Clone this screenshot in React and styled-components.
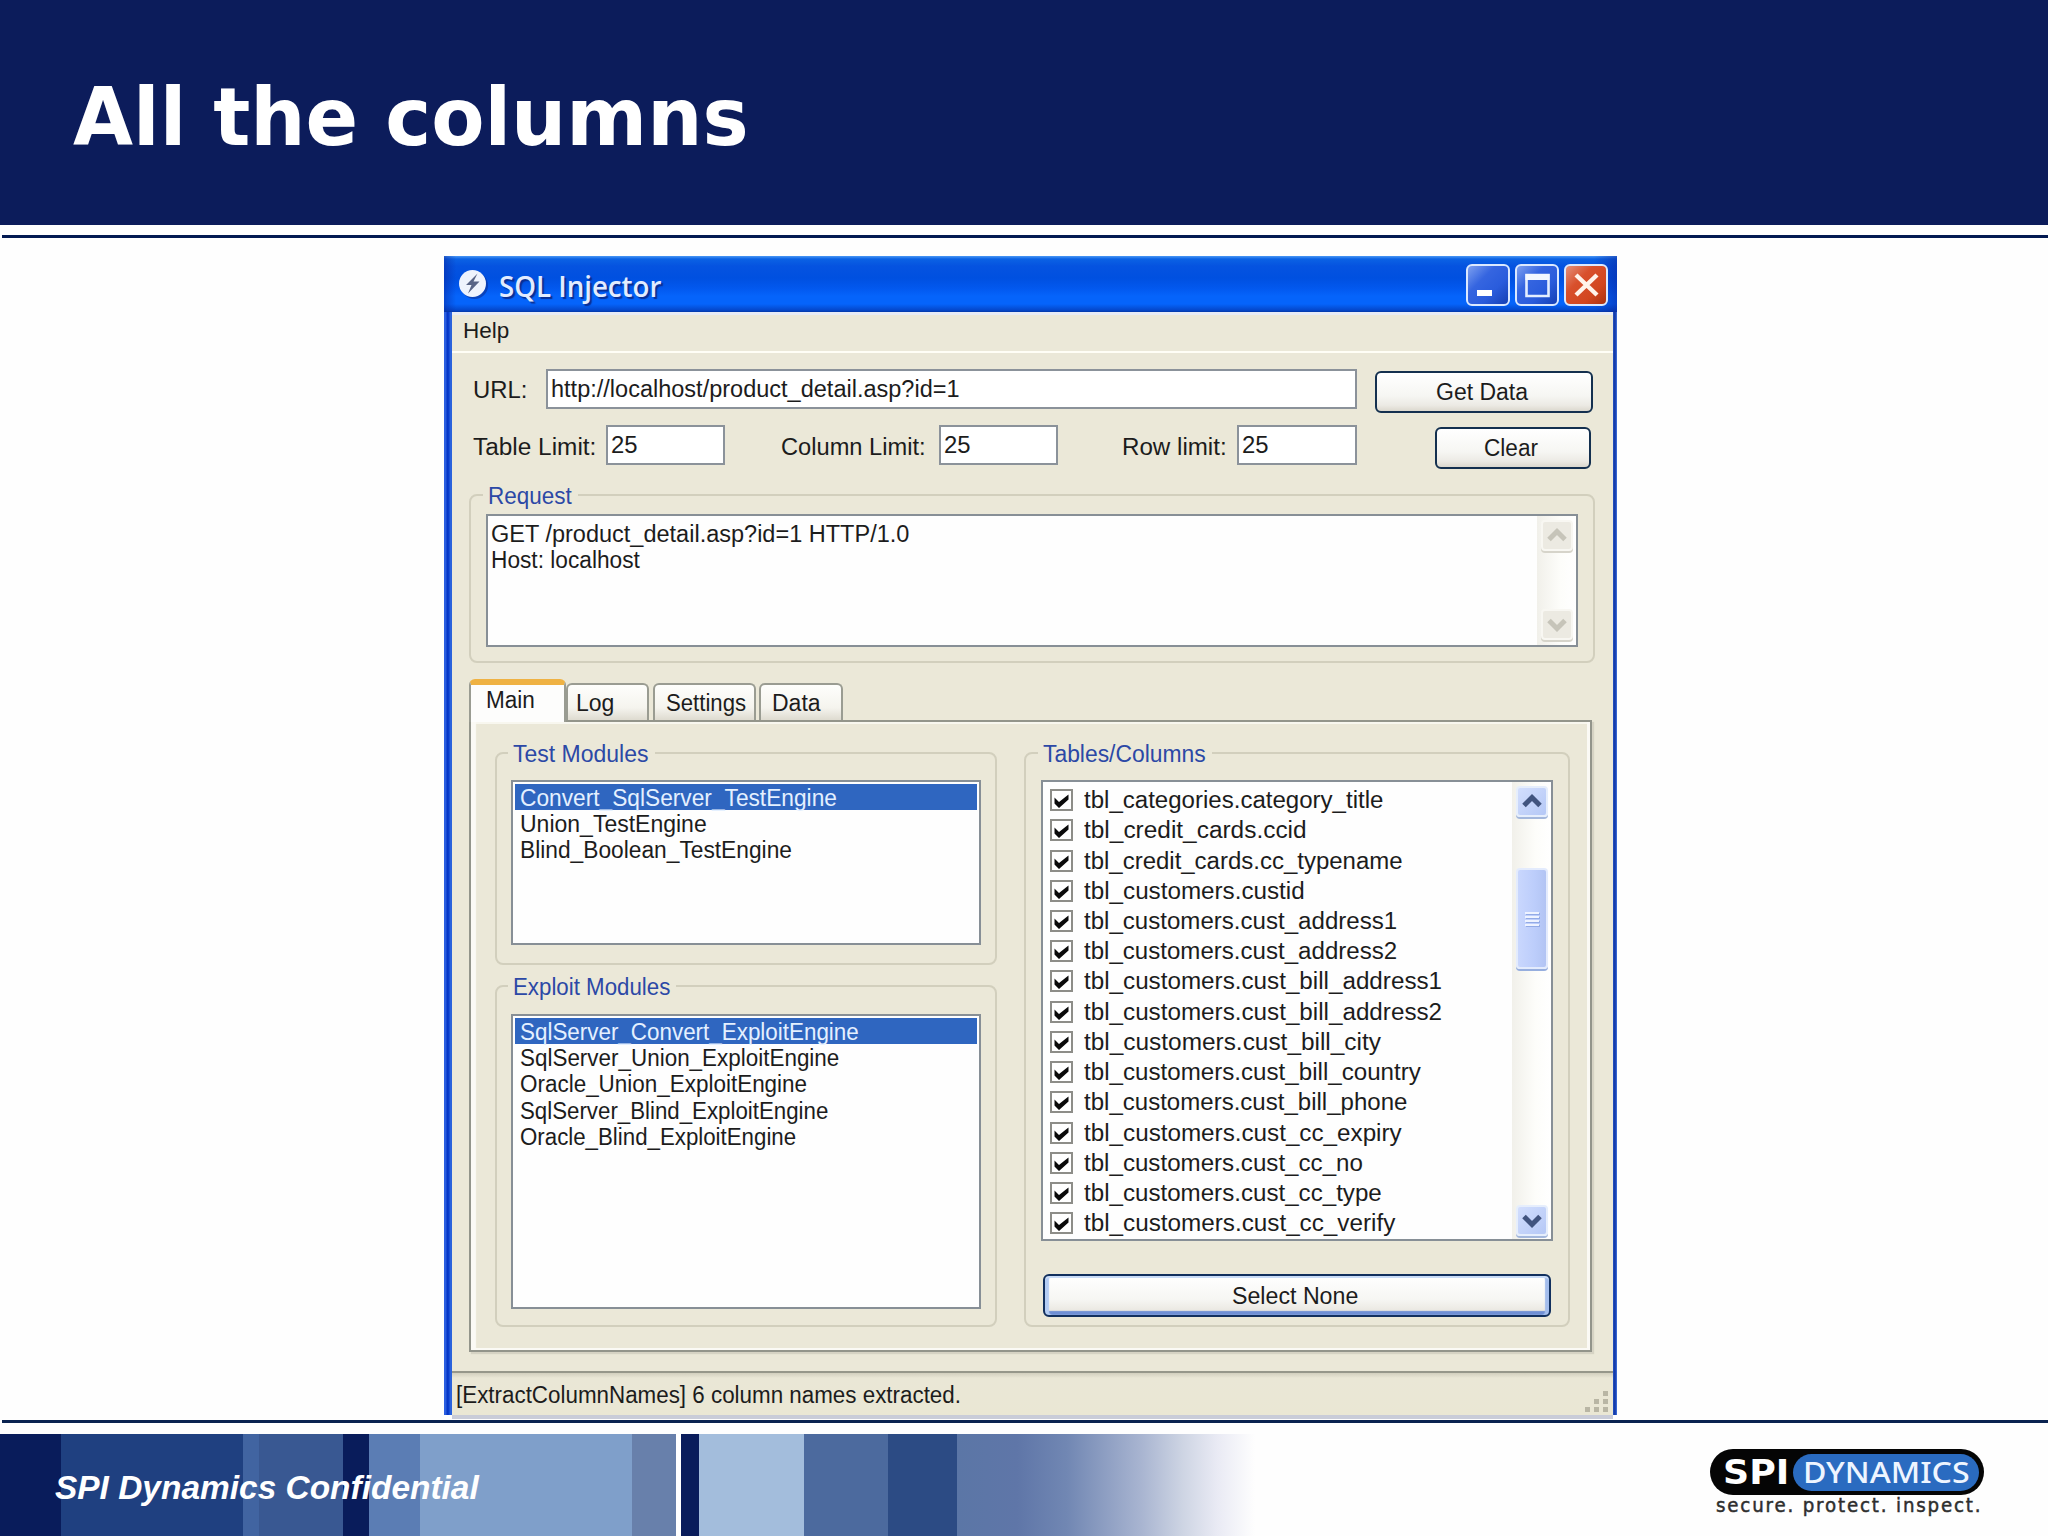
import React, { useLayoutEffect, useRef, useState } from "react";
import styled, { createGlobalStyle, css } from "styled-components";

const GlobalStyle = createGlobalStyle`
  *, *::before, *::after { box-sizing: border-box; }
  body { margin: 0; background: #fff; }
`;

const SANS = `"Liberation Sans", Arial, sans-serif`;

const FitBox = styled.span`
  display: inline-block;
  flex: none;
  width: ${(p) => p.$w}px;
  white-space: nowrap;
  text-align: left;
`;

const FitInner = styled.span`
  display: inline-block;
  transform-origin: 0 50%;
`;

/* A run of text condensed or widened to a given width. */
function Fit({ w, children }) {
  const ref = useRef(null);
  const [scale, setScale] = useState(1);
  useLayoutEffect(() => {
    setScale(w / ref.current.offsetWidth);
  }, [w, children]);
  return (
    <FitBox $w={w}>
      <FitInner ref={ref} style={{ transform: `scaleX(${scale})` }}>
        {children}
      </FitInner>
    </FitBox>
  );
}

/* ---------- slide ---------- */

const Slide = styled.div`
  width: 2048px;
  height: 1536px;
  display: flex;
  flex-direction: column;
  overflow: hidden;
  background: #fefefe;
  font-family: ${SANS};
`;

const SlideHeader = styled.header`
  height: 225px;
  flex: none;
  background: #0c1c5b;
  padding: 58px 0 0 73px;
`;

const SlideTitle = styled.h1`
  margin: 0;
  font: bold 80px/120px "DejaVu Sans", Verdana, sans-serif;
  color: #fff;
`;

const Rule = styled.div`
  height: 3px;
  flex: none;
  margin: ${(p) => p.$top}px 0 0 2px;
  background: ${(p) => p.$color};
`;

const SlideFooter = styled.footer`
  height: 102px;
  flex: none;
  margin-top: 11px;
  display: grid;
  grid-template: 102px / 2048px;
  > * { grid-area: 1 / 1; }
`;

const Bands = styled.div`
  display: flex;
`;

const Band = styled.div`
  width: ${(p) => p.$w}px;
  background: ${(p) => p.$bg};
`;

const FooterContent = styled.div`
  display: flex;
  justify-content: space-between;
  padding: 0 64px 0 55px;
`;

const FooterText = styled.div`
  font: italic bold 34px/40px ${SANS};
  padding-top: 33px;
  color: #fff;
`;

const Logo = styled.div`
  width: 274px;
  padding-top: 15px;
`;

const LogoPill = styled.div`
  height: 46px;
  display: flex;
  align-items: center;
  border-radius: 23px;
  background: #050505;
  padding: 0 5px 0 13px;
`;

const LogoSpi = styled.div`
  width: 70px;
  padding-top: 2px;
  font: bold 33px/40px "DejaVu Sans", sans-serif;
  color: #fff;
`;

const LogoDynamics = styled.div`
  flex: 1;
  height: 37px;
  border-radius: 19px;
  background: #2a6bc0;
  padding-left: 10px;
  font: 500 29px/36px "Noto Sans", sans-serif;
  color: #eef5ff;
`;

const LogoTag = styled.div`
  font: 20px/24px "DejaVu Sans", sans-serif;
  letter-spacing: 2px;
  padding: 0 0 0 6px;
  margin-top: -2px;
  color: #2e2e2e;
  -webkit-text-stroke: 0.5px #2e2e2e;
`;

/* ---------- window ---------- */

const Window = styled.section`
  width: 1173px;
  height: 1159px;
  flex: none;
  margin: 18px 0 0 444px;
  display: flex;
  flex-direction: column;
  background: linear-gradient(90deg, #2b5fe0 0, #2b5fe0 2px, #0434c4 3px, #0a3fd0 5px, #2a62dc 6px, #2a62dc 8px, transparent 8px, transparent 1168px, #2f62cf 1169px, #1237a6 1170px, #1d48b8 1172px, #4f82e8 1173px);
`;

const TitleBar = styled.div`
  height: 56px;
  flex: none;
  display: flex;
  align-items: flex-start;
  padding: 8px 9px 0 14px;
  background:
    linear-gradient(90deg, rgba(10, 40, 160, 0.5) 0, rgba(10, 40, 160, 0) 12px, rgba(10, 40, 160, 0) 1150px, rgba(10, 40, 160, 0.55) 1173px),
    linear-gradient(180deg, #4a97f5 0, #0b62e4 3px, #0553e0 10px, #0050e0 22px, #0258ee 32px, #0564fb 40px, #0564fb 48px, #0448cc 54px, #0338a8 56px);
`;

const AppIcon = styled.svg`
  width: 30px;
  height: 32px;
  margin-top: 4px;
`;

const Caption = styled.div`
  flex: 1;
  padding: 2px 0 0 11px;
  font: 600 28px/40px "Open Sans", "Noto Sans", sans-serif;
  color: #e2ecff;
  text-shadow: 2px 2px 1px #0a2f94;
`;

const CaptionButtons = styled.div`
  display: flex;
  gap: 5px;
`;

const CaptionButton = styled.div`
  width: 44px;
  height: 42px;
  border: 2px solid #dbe9ff;
  border-radius: 6px;
  background: ${(p) =>
    p.$close
      ? "linear-gradient(135deg, #e4907a 0, #d8502c 35%, #d2461f 70%, #a93212 100%)"
      : "linear-gradient(135deg, #7da0f0 0, #3565e0 35%, #2a5cdc 65%, #1540b4 100%)"};
  svg { display: block; width: 40px; height: 38px; }
`;

const Client = styled.div`
  flex: 1;
  min-height: 0;
  margin: 0 4px 0 8px;
  display: flex;
  flex-direction: column;
  background: #ebe8d8;
  font-size: 23px;
  line-height: 26px;
  color: #1c1c1c;
`;

const MenuBar = styled.div`
  height: 41px;
  flex: none;
  border-top: 3px solid #e7ebf5;
  border-bottom: 2px solid #fffef6;
  padding: 3px 0 0 11px;
  font-size: 22px;
`;

const FormRow = styled.div`
  display: flex;
  flex: none;
  height: ${(p) => p.$h}px;
  margin-top: ${(p) => p.$top || 0}px;
  padding-left: 21px;
`;

const Label = styled.label`
  width: ${(p) => p.$w}px;
  padding-top: ${(p) => p.$top}px;
  margin-left: ${(p) => p.$left || 0}px;
`;

const Field = styled.div`
  width: ${(p) => p.$w}px;
  height: 40px;
  border: 2px solid #8b929a;
  background: #fff;
  padding: 5px 0 0 3px;
`;

const Button = styled.button`
  display: block;
  width: ${(p) => p.$w}px;
  height: ${(p) => p.$h || 42}px;
  margin: ${(p) => p.$margin};
  padding: 0 4px 0 0;
  border: 2px solid #14304f;
  border-radius: 6px;
  background: linear-gradient(180deg, #fff 0, #f6f6f3 60%, #eceae4 85%, #dcd8ce 100%);
  font: 23px/26px ${SANS};
  color: #1c1c1c;
  ${(p) =>
    p.$focused &&
    css`
      border-color: #12305e;
      box-shadow: inset 0 2px 0 #c9dcf8, inset 4px 0 1px #b4cdf4, inset -4px 0 1px #a3bdec, inset 0 -4px 1px #6f8fd4;
    `}
`;

const Group = styled.fieldset`
  margin: ${(p) => p.$margin || 0};
  width: ${(p) => p.$w}px;
  height: ${(p) => p.$h}px;
  min-width: 0;
  flex: none;
  padding: ${(p) => p.$pad};
  border: 2px solid #d2cfbd;
  border-radius: 8px;
`;

const Legend = styled.legend`
  margin-left: -3px;
  padding: 1px 6px 0 5px;
  height: 26px;
  line-height: 26px;
  color: #2c48a6;
`;

const Sunken = styled.div`
  width: ${(p) => p.$w}px;
  height: ${(p) => p.$h}px;
  border: 2px solid #878f96;
  background: #fefefe;
  display: flex;
  justify-content: space-between;
`;

const RequestText = styled.div`
  padding: 5px 0 0 3px;
  > * { display: block; }
`;

const ScrollTrack = styled.div`
  width: 39px;
  padding: ${(p) => p.$pad};
  display: flex;
  flex-direction: column;
  align-items: center;
  background: linear-gradient(90deg, #f1f0ea, #fdfdfa 60%, #fff);
`;

const ScrollButton = styled.div`
  width: 32px;
  height: 31px;
  flex: none;
  border-radius: 4px;
  border: 2px solid ${(p) => (p.$off ? "#f8f7f2" : "#e6eefc")};
  background: ${(p) => (p.$off ? "#eceae2" : "linear-gradient(135deg, #d2defd, #b5c8f6)")};
  box-shadow: 0 2px 0 ${(p) => (p.$off ? "#d6d4ca" : "#a3b7dc")};
  svg { display: block; width: 28px; height: 27px; }
`;

const ScrollSpace = styled.div`
  flex: ${(p) => (p.$h ? `0 0 ${p.$h}px` : "1")};
`;

const Thumb = styled.div`
  width: 32px;
  height: 101px;
  flex: none;
  display: flex;
  flex-direction: column;
  align-items: center;
  justify-content: center;
  gap: 2px;
  border-radius: 4px;
  border: 2px solid #e3ebfd;
  background: linear-gradient(90deg, #c9d7fd, #bccdfb 60%, #b2c4f3);
  box-shadow: 0 2px 0 #96aede;
`;

const Grip = styled.div`
  width: 14px;
  height: 2px;
  background: #eef3ff;
  box-shadow: 1px 1px 0 #93abe6;
`;

const TabRow = styled.div`
  display: flex;
  align-items: flex-end;
  flex: none;
  height: 41px;
  margin: 16px 0 0 17px;
`;

const Tab = styled.div`
  width: ${(p) => p.$w}px;
  height: 37px;
  margin-right: ${(p) => p.$gap || 0}px;
  padding: ${(p) => p.$pad};
  border: 2px solid #9a9c92;
  border-bottom: 0;
  border-radius: 6px 6px 0 0;
  background: linear-gradient(180deg, #fefefc 0, #f5f4ee 65%, #dedbd0 100%);
  ${(p) =>
    p.$active &&
    css`
      height: 43px;
      margin-bottom: -2px;
      z-index: 1;
      border-top: 6px solid #efb243;
      background: #fdfdfc;
    `}
`;

const TabPanel = styled.div`
  width: 1123px;
  height: 632px;
  flex: none;
  margin-left: 17px;
  padding: 18px 0 0 24px;
  display: flex;
  gap: 27px;
  border: 2px solid #93958b;
  box-shadow: inset 5px 0 1px #fbfaf5, inset -3px -2px 0 #fbfaf5, inset 0 2px 0 #f8f7ef, 2px 2px 1px #d6d3c4;
`;

const ModuleColumn = styled.div`
  display: flex;
  flex-direction: column;
  gap: 8px;
`;

const ModuleList = styled.div`
  flex: 1;
  padding: 2px;
`;

const ModuleRow = styled.div`
  height: 26.2px;
  padding: 1px 0 0 5px;
  line-height: 26px;
  ${(p) =>
    p.$selected &&
    css`
      background: #2f66c0;
      color: #e4f0ff;
    `}
`;

const CheckList = styled.div`
  padding: 3px 0 0 7px;
`;

const CheckRow = styled.div`
  height: 30.22px;
  display: flex;
  align-items: center;
  gap: 11px;
`;

const CheckBox = styled.svg`
  width: 23px;
  height: 22px;
`;

const StatusBar = styled.div`
  flex: 1;
  margin-top: 19px;
  display: flex;
  justify-content: space-between;
  align-items: flex-start;
  padding: 9px 3px 0 4px;
  border-top: 2px solid #96978a;
  border-bottom: 4px solid #c9ccd8;
  background: linear-gradient(180deg, #d2cfbe 0, #eae7d6 5px, #eae7d4 100%);
`;

const GripDots = styled.svg`
  width: 26px;
  height: 26px;
  margin-top: 7px;
`;

/* ---------- data ---------- */

const BANDS = [
  [61, "#091c5b"],
  [182, "#1f4080"],
  [16, "#4164a1"],
  [84, "#395892"],
  [26, "#091c5b"],
  [51, "#5b7db4"],
  [212, "#7f9fca"],
  [44, "#6880ab"],
  [5, "#ffffff"],
  [18, "#091c5b"],
  [105, "#a3bddc"],
  [84, "#4c6a9e"],
  [69, "#2c4b84"],
  [300, "linear-gradient(90deg, #5b76a6 0, #5f76a8 60px, #7187b3 110px, #a9b5d1 185px, #cdd4e3 225px, #e9eaf4 260px, #fefefe 298px)"],
];

const TEST_MODULES = [
  ["Convert_SqlServer_TestEngine", 317],
  ["Union_TestEngine", 187],
  ["Blind_Boolean_TestEngine", 272],
];

const EXPLOIT_MODULES = [
  ["SqlServer_Convert_ExploitEngine", 339],
  ["SqlServer_Union_ExploitEngine", 319],
  ["Oracle_Union_ExploitEngine", 287],
  ["SqlServer_Blind_ExploitEngine", 308],
  ["Oracle_Blind_ExploitEngine", 276],
];

const COLUMNS = [
  ["tbl_categories.category_title", 299],
  ["tbl_credit_cards.ccid", 223],
  ["tbl_credit_cards.cc_typename", 319],
  ["tbl_customers.custid", 221],
  ["tbl_customers.cust_address1", 313],
  ["tbl_customers.cust_address2", 313],
  ["tbl_customers.cust_bill_address1", 358],
  ["tbl_customers.cust_bill_address2", 358],
  ["tbl_customers.cust_bill_city", 297],
  ["tbl_customers.cust_bill_country", 337],
  ["tbl_customers.cust_bill_phone", 323],
  ["tbl_customers.cust_cc_expiry", 318],
  ["tbl_customers.cust_cc_no", 279],
  ["tbl_customers.cust_cc_type", 298],
  ["tbl_customers.cust_cc_verify", 311],
];

/* ---------- parts ---------- */

function Arrow({ down, off }) {
  return (
    <ScrollButton $off={off}>
      <svg viewBox="0 0 28 27">
        <path
          d={down ? "M6 9.5 L14 17.5 L22 9.5" : "M6 17.5 L14 9.5 L22 17.5"}
          fill="none"
          stroke={off ? "#c6c4b9" : "#41547f"}
          strokeWidth="5"
        />
      </svg>
    </ScrollButton>
  );
}

function Modules({ title, titleWidth, items, h, listHeight, pad }) {
  return (
    <Group $w={502} $h={h} $pad={pad}>
      <Legend>
        <Fit w={titleWidth}>{title}</Fit>
      </Legend>
      <Sunken $w={470} $h={listHeight}>
        <ModuleList>
          {items.map(([name, w], i) => (
            <ModuleRow key={name} $selected={i === 0}>
              <Fit w={w}>{name}</Fit>
            </ModuleRow>
          ))}
        </ModuleList>
      </Sunken>
    </Group>
  );
}

export default function App() {
  return (
    <Slide>
      <GlobalStyle />
      <SlideHeader>
        <SlideTitle>
          <Fit w={676}>All the columns</Fit>
        </SlideTitle>
      </SlideHeader>
      <Rule $top={10} $color="#031a52" />

      <Window>
        <TitleBar>
          <AppIcon viewBox="0 0 30 32">
            <circle cx="16.5" cy="17.5" r="13.5" fill="#0a2f94" opacity="0.6" />
            <circle cx="14.5" cy="15.5" r="13.5" fill="#eef3fd" />
            <path d="M19.5 5.5 L8 17 L13.5 17 L10 25.5 L21.5 13.5 L15.5 13.5 Z" fill="#586486" />
          </AppIcon>
          <Caption>
            <Fit w={162}>SQL Injector</Fit>
          </Caption>
          <CaptionButtons>
            <CaptionButton>
              <svg viewBox="0 0 40 38">
                <rect x="9" y="24" width="15" height="6" fill="#fff" />
              </svg>
            </CaptionButton>
            <CaptionButton>
              <svg viewBox="0 0 40 38">
                <path d="M9.5 9 H31.5 V30 H9.5 Z" fill="none" stroke="#e4eeff" strokeWidth="2.6" />
                <rect x="8.5" y="8" width="24" height="6" fill="#f4f8ff" />
              </svg>
            </CaptionButton>
            <CaptionButton $close>
              <svg viewBox="0 0 40 38">
                <path d="M10 9 L31 29 M31 9 L10 29" stroke="#fff3ea" strokeWidth="4.4" />
              </svg>
            </CaptionButton>
          </CaptionButtons>
        </TitleBar>

        <Client>
          <MenuBar>
            <Fit w={46}>Help</Fit>
          </MenuBar>

          <FormRow $h={56} $top={16}>
            <Label $w={73} $top={8}>
              <Fit w={54}>URL:</Fit>
            </Label>
            <Field $w={811}>
              <Fit w={409}>http://localhost/product_detail.asp?id=1</Fit>
            </Field>
            <Button $w={218} $margin="2px 0 0 18px">
              <Fit w={92}>Get Data</Fit>
            </Button>
          </FormRow>

          <FormRow $h={57}>
            <Label $w={133} $top={9}>
              <Fit w={123}>Table Limit:</Fit>
            </Label>
            <Field $w={119}>
              <Fit w={27}>25</Fit>
            </Field>
            <Label $w={158} $top={9} $left={56}>
              <Fit w={145}>Column Limit:</Fit>
            </Label>
            <Field $w={119}>
              <Fit w={27}>25</Fit>
            </Field>
            <Label $w={115} $top={9} $left={64}>
              <Fit w={105}>Row limit:</Fit>
            </Label>
            <Field $w={120}>
              <Fit w={27}>25</Fit>
            </Field>
            <Button $w={156} $margin="2px 0 0 78px">
              <Fit w={54}>Clear</Fit>
            </Button>
          </FormRow>

          <Group $margin="0 0 0 17px" $w={1126} $h={181} $pad="6px 0 0 15px">
            <Legend>
              <Fit w={84}>Request</Fit>
            </Legend>
            <Sunken $w={1092} $h={133}>
              <RequestText>
                <Fit w={418}>GET /product_detail.asp?id=1 HTTP/1.0</Fit>
                <Fit w={149}>Host: localhost</Fit>
              </RequestText>
              <ScrollTrack $pad="4px 0 5px">
                <Arrow off />
                <ScrollSpace />
                <Arrow off down />
              </ScrollTrack>
            </Sunken>
          </Group>

          <TabRow>
            <Tab $w={97} $active $pad="2px 0 0 15px">
              <Fit w={49}>Main</Fit>
            </Tab>
            <Tab $w={83} $gap={4} $pad="5px 0 0 8px">
              <Fit w={38}>Log</Fit>
            </Tab>
            <Tab $w={103} $gap={3} $pad="5px 0 0 11px">
              <Fit w={80}>Settings</Fit>
            </Tab>
            <Tab $w={84} $pad="5px 0 0 11px">
              <Fit w={49}>Data</Fit>
            </Tab>
          </TabRow>

          <TabPanel>
            <ModuleColumn>
              <Modules title="Test Modules" titleWidth={136} items={TEST_MODULES} h={225} listHeight={165} pad="14px 0 0 14px" />
              <Modules title="Exploit Modules" titleWidth={157} items={EXPLOIT_MODULES} h={354} listHeight={295} pad="15px 0 0 14px" />
            </ModuleColumn>

            <Group $w={546} $h={587} $pad="14px 0 0 15px">
              <Legend>
                <Fit w={163}>Tables/Columns</Fit>
              </Legend>
              <Sunken $w={512} $h={461}>
                <CheckList>
                  {COLUMNS.map(([name, w]) => (
                    <CheckRow key={name}>
                      <CheckBox viewBox="0 0 23 22">
                        <rect x="1" y="1" width="21" height="20" fill="#fff" stroke="#8d8d88" strokeWidth="2" />
                        <path d="M4.5 8.5 L9 13 L18.5 5.5 V10.5 L9 19 L4.5 14.5 Z" fill="#0a0a0a" />
                      </CheckBox>
                      <Fit w={w}>{name}</Fit>
                    </CheckRow>
                  ))}
                </CheckList>
                <ScrollTrack $pad="4px 0 3px">
                  <Arrow />
                  <ScrollSpace $h={51} />
                  <Thumb>
                    <Grip />
                    <Grip />
                    <Grip />
                    <Grip />
                  </Thumb>
                  <ScrollSpace />
                  <Arrow down />
                </ScrollTrack>
              </Sunken>
              <Button $w={508} $h={43} $focused $margin="33px 0 0 2px">
                <Fit w={126}>Select None</Fit>
              </Button>
            </Group>
          </TabPanel>

          <StatusBar>
            <Fit w={505}>[ExtractColumnNames] 6 column names extracted.</Fit>
            <GripDots viewBox="0 0 26 26" fill="#b9b6a4">
              <rect x="19" y="2" width="5" height="5" />
              <rect x="10" y="10" width="5" height="5" />
              <rect x="19" y="10" width="5" height="5" />
              <rect x="1" y="18" width="5" height="5" />
              <rect x="10" y="18" width="5" height="5" />
              <rect x="19" y="18" width="5" height="5" />
            </GripDots>
          </StatusBar>
        </Client>
      </Window>

      <Rule $top={5} $color="#0a2350" />
      <SlideFooter>
        <Bands>
          {BANDS.map(([w, bg], i) => (
            <Band key={i} $w={w} $bg={bg} />
          ))}
        </Bands>
        <FooterContent>
          <FooterText>
            <Fit w={424}>SPI Dynamics Confidential</Fit>
          </FooterText>
          <Logo>
            <LogoPill>
              <LogoSpi>
                <Fit w={66}>SPI</Fit>
              </LogoSpi>
              <LogoDynamics>
                <Fit w={167}>DYNAMICS</Fit>
              </LogoDynamics>
            </LogoPill>
            <LogoTag>
              <Fit w={266}>secure. protect. inspect.</Fit>
            </LogoTag>
          </Logo>
        </FooterContent>
      </SlideFooter>
    </Slide>
  );
}
